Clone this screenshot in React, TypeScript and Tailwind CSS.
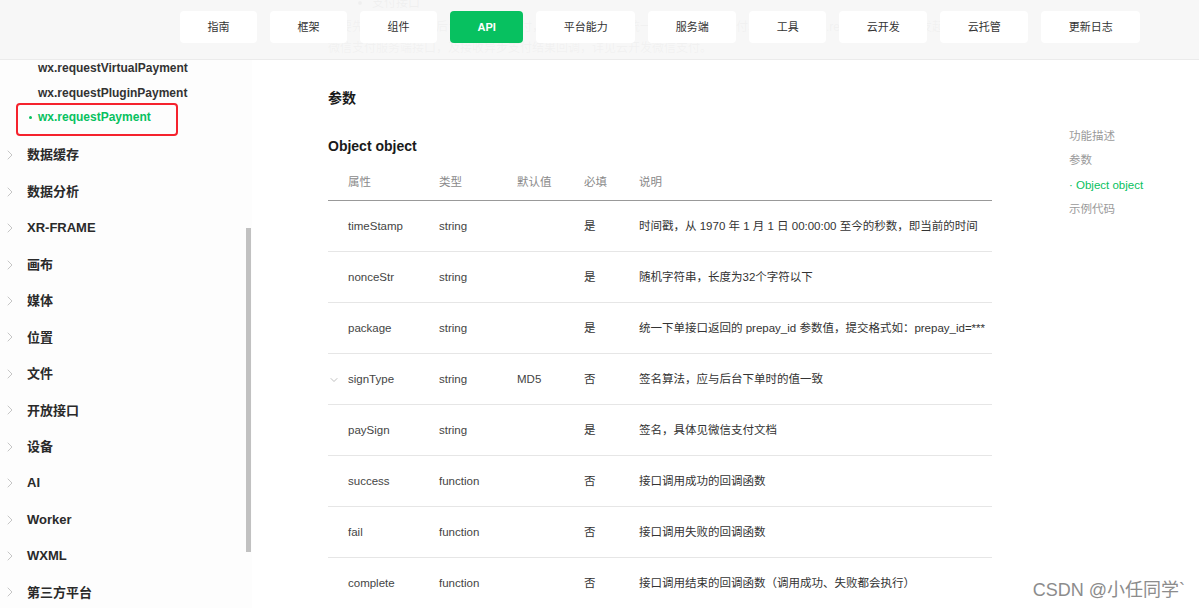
import React from 'react';
import { ChevronRight, ChevronDown } from 'lucide-react';

const navItems = ['指南', '框架', '组件', 'API', '平台能力', '服务端', '工具', '云开发', '云托管', '更新日志'];

const subItems = [
  { label: 'wx.requestVirtualPayment', active: false },
  { label: 'wx.requestPluginPayment', active: false },
  { label: 'wx.requestPayment', active: true },
];

const categories = [
  '数据缓存',
  '数据分析',
  'XR-FRAME',
  '画布',
  '媒体',
  '位置',
  '文件',
  '开放接口',
  '设备',
  'AI',
  'Worker',
  'WXML',
  '第三方平台',
];

type Row = { name: string; type: string; def: string; required: string; desc: string; expandable?: boolean };

const rows: Row[] = [
  { name: 'timeStamp', type: 'string', def: '', required: '是', desc: '时间戳，从 1970 年 1 月 1 日 00:00:00 至今的秒数，即当前的时间' },
  { name: 'nonceStr', type: 'string', def: '', required: '是', desc: '随机字符串，长度为32个字符以下' },
  { name: 'package', type: 'string', def: '', required: '是', desc: '统一下单接口返回的 prepay_id 参数值，提交格式如：prepay_id=***' },
  { name: 'signType', type: 'string', def: 'MD5', required: '否', desc: '签名算法，应与后台下单时的值一致', expandable: true },
  { name: 'paySign', type: 'string', def: '', required: '是', desc: '签名，具体见微信支付文档' },
  { name: 'success', type: 'function', def: '', required: '否', desc: '接口调用成功的回调函数' },
  { name: 'fail', type: 'function', def: '', required: '否', desc: '接口调用失败的回调函数' },
  { name: 'complete', type: 'function', def: '', required: '否', desc: '接口调用结束的回调函数（调用成功、失败都会执行）' },
];

const toc = [
  { label: '功能描述', active: false },
  { label: '参数', active: false },
  { label: '· Object object', active: true },
  { label: '示例代码', active: false },
];

const cols = 'grid grid-cols-[91px_78px_67px_55px_1fr]';

export default function App() {
  return (
    <div
      className="relative w-[1199px] h-[608px] overflow-hidden bg-white text-[#333]"
      style={{ fontFamily: '"Liberation Sans", "Noto Sans CJK SC", sans-serif' }}
    >
      <div className="flex h-full">
        {/* sidebar */}
        <aside className="flex w-[252px] shrink-0 bg-[#fdfdfd]">
          <div className="w-[246px] pt-[56px]">
            {subItems.map((item) => (
              <div
                key={item.label}
                className={`relative flex h-[24.5px] items-center pl-[38px] text-[12px] font-bold ${item.active ? 'text-[#07c160]' : 'text-[#333]'}`}
              >
                {item.active && <span className="absolute left-[29px] top-[11px] h-[3px] w-[3px] rounded-full bg-[#07c160]" />}
                {item.label}
              </div>
            ))}
            <div className="mt-[7.5px]">
              {categories.map((c) => (
                <div key={c} className="flex h-[36.45px] items-center pl-[2px]">
                  <ChevronRight size={16} strokeWidth={1.3} className="text-[#bdbdbd]" />
                  <span className="ml-[9px] text-[13px] font-semibold text-[#2a2a2a]">{c}</span>
                </div>
              ))}
            </div>
          </div>
          <div className="w-[6px]">
            <div className="mt-[228px] h-[324px] w-[5px] bg-[#c1c1c1]" />
          </div>
        </aside>

        {/* main content */}
        <main className="w-[740px] shrink-0 pl-[76px]">
          <div className="-mt-[7px] flex h-[20px] items-center pl-[30px] text-[12px] text-[#444]">
            <span className="mr-[10px] h-[4px] w-[4px] rounded-full bg-[#444]" />
            支付接口
          </div>
          <div className="mt-[4px] h-[21px] whitespace-nowrap text-[12px] leading-[21px] text-[#666]">
            需要先在小程序管理后台开通微信支付，并在服务端调用统一下单接口生成预付单，再调用 wx.requestPayment 发起微信支付签名与
          </div>
          <div className="h-[21px] whitespace-nowrap text-[12px] leading-[21px] text-[#666]">
            微信支付服务端接口，及接收异步支付结果回调，详见云开发微信支付。
          </div>

          <h3 className="mt-[30px] h-[18px] text-[14px] font-semibold leading-[18px] text-[#1a1a1a]">参数</h3>
          <h4 className="mt-[30px] h-[18px] text-[14px] font-bold leading-[18px] text-[#1a1a1a]">Object object</h4>

          <div className="mt-[11px] w-[664px] text-[11.5px]">
            <div className={`${cols} h-[35px] items-center border-b border-[#999] text-[#8a8a8a]`}>
              <div className="pl-5">属性</div>
              <div className="pl-5">类型</div>
              <div className="pl-5">默认值</div>
              <div className="pl-5">必填</div>
              <div className="pl-5">说明</div>
            </div>
            {rows.map((r) => (
              <div key={r.name} className={`${cols} h-[51px] items-center border-b border-[#e6e6e6] pt-[1px] text-[#444]`}>
                <div className="flex items-center">
                  <span className="flex w-5 items-center">
                    {r.expandable && <ChevronDown size={12} strokeWidth={1.5} className="text-[#aaa]" />}
                  </span>
                  {r.name}
                </div>
                <div className="pl-5">{r.type}</div>
                <div className="pl-5">{r.def}</div>
                <div className="pl-5 text-[#333]">{r.required}</div>
                <div className="whitespace-nowrap pl-5 text-[#333]">{r.desc}</div>
              </div>
            ))}
          </div>
        </main>

        {/* right toc */}
        <nav className="pl-[77px] pt-[123.5px]">
          {toc.map((t) => (
            <div
              key={t.label}
              className={`h-[24.6px] whitespace-nowrap text-[11.5px] leading-[24.6px] ${t.active ? 'text-[#07c160]' : 'text-[#9a9a9a]'}`}
            >
              {t.label}
            </div>
          ))}
        </nav>
      </div>

      {/* top navigation bar, lies over the scrolled content */}
      <header className="absolute left-0 right-0 top-0 z-10 flex h-[60px] items-start gap-[13px] border-b border-[#ebebeb] bg-[#f7f7f7]/[0.96] pl-[180px] pt-[11px]">
        {navItems.map((n) => (
          <div
            key={n}
            className={`flex h-8 items-center rounded-[4px] px-[27.5px] text-[11px] ${n === 'API' ? 'bg-[#07c160] font-bold text-white' : 'bg-white text-[#333]'}`}
          >
            {n}
          </div>
        ))}
      </header>

      {/* annotation box */}
      <div className="absolute left-[16px] top-[103px] h-[33px] w-[162px] rounded-[4px] border-2 border-[#f5222d]" />

      <div
        className="absolute right-[14px] top-[577px] text-[18px] text-[#8c8c8c]"
        style={{ textShadow: '0 0 2px #fff' }}
      >
        CSDN @小任同学`
      </div>
    </div>
  );
}
